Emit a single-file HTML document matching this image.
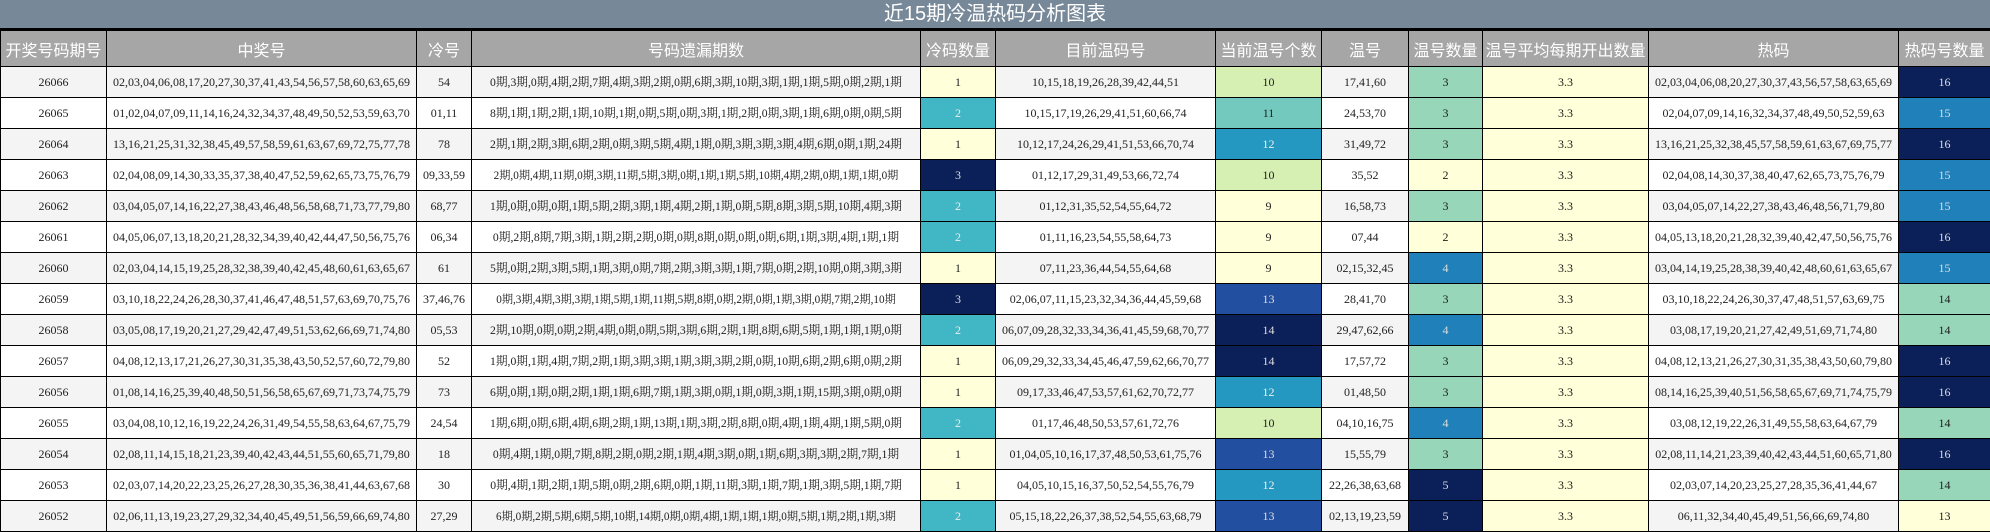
<!DOCTYPE html>
<html><head><meta charset="utf-8"><style>
html,body{margin:0;padding:0;background:#fff;width:1990px;height:532px;overflow:hidden}
.t{height:28px;background:#778899;color:#fff;font:20px "Liberation Sans","Noto Sans CJK SC",sans-serif;text-align:center;line-height:28px;border-bottom:2px solid #000;box-sizing:content-box}
table{border-collapse:collapse;table-layout:fixed;width:1990px;font:12px "Liberation Serif","Noto Serif CJK SC","Noto Sans CJK SC",serif;color:#222}
td,th{border:1px solid #000;text-align:center;white-space:nowrap;overflow:hidden;padding:0}
th{background:#a6a6a6;color:#fff;font:normal 16px "Liberation Sans","Noto Sans CJK SC",sans-serif;height:35px}
td{height:30px}
tr:nth-child(even) td{background:#f4f4f4}
tr:nth-child(odd) td{background:#fff}
td.y{background:#ffffd9!important}
td.g{background:#d6efb3!important}
td.c{background:#73c9bd!important}
td.m{background:#97d6b9!important}
td.a{background:#41b6c4!important;color:#eee}
td.b{background:#2498c1!important;color:#eee}
td.s{background:#2080b9!important;color:#ddd}
td.d{background:#234fa0!important;color:#ddd}
td.n{background:#0b1f59!important;color:#ddd}
.q{font-size:11.7px}
</style></head><body>
<div class="t">近15期冷温热码分析图表</div>
<table>
<colgroup><col style="width:106px"><col style="width:310px"><col style="width:55px"><col style="width:449px"><col style="width:75px"><col style="width:220px"><col style="width:106px"><col style="width:87px"><col style="width:74px"><col style="width:166px"><col style="width:250px"><col style="width:92px"></colgroup>
<tr><th>开奖号码期号</th><th>中奖号</th><th>冷号</th><th>号码遗漏期数</th><th>冷码数量</th><th>目前温码号</th><th>当前温号个数</th><th>温号</th><th>温号数量</th><th>温号平均每期开出数量</th><th>热码</th><th>热码号数量</th></tr>
<tr><td>26066</td><td>02,03,04,06,08,17,20,27,30,37,41,43,54,56,57,58,60,63,65,69</td><td>54</td><td class="q">0期,3期,0期,4期,2期,7期,4期,3期,2期,0期,6期,3期,10期,3期,1期,1期,5期,0期,2期,1期</td><td class="y">1</td><td>10,15,18,19,26,28,39,42,44,51</td><td class="g">10</td><td>17,41,60</td><td class="m">3</td><td class="y">3.3</td><td>02,03,04,06,08,20,27,30,37,43,56,57,58,63,65,69</td><td class="n">16</td></tr>
<tr><td>26065</td><td>01,02,04,07,09,11,14,16,24,32,34,37,48,49,50,52,53,59,63,70</td><td>01,11</td><td class="q">8期,1期,1期,2期,1期,10期,1期,0期,5期,0期,3期,1期,2期,0期,3期,1期,6期,0期,0期,5期</td><td class="a">2</td><td>10,15,17,19,26,29,41,51,60,66,74</td><td class="c">11</td><td>24,53,70</td><td class="m">3</td><td class="y">3.3</td><td>02,04,07,09,14,16,32,34,37,48,49,50,52,59,63</td><td class="s">15</td></tr>
<tr><td>26064</td><td>13,16,21,25,31,32,38,45,49,57,58,59,61,63,67,69,72,75,77,78</td><td>78</td><td class="q">2期,1期,2期,3期,6期,2期,0期,3期,5期,4期,1期,0期,3期,3期,3期,4期,6期,0期,1期,24期</td><td class="y">1</td><td>10,12,17,24,26,29,41,51,53,66,70,74</td><td class="b">12</td><td>31,49,72</td><td class="m">3</td><td class="y">3.3</td><td>13,16,21,25,32,38,45,57,58,59,61,63,67,69,75,77</td><td class="n">16</td></tr>
<tr><td>26063</td><td>02,04,08,09,14,30,33,35,37,38,40,47,52,59,62,65,73,75,76,79</td><td>09,33,59</td><td class="q" style="font-size:11.2px">2期,0期,4期,11期,0期,3期,11期,5期,3期,0期,1期,1期,5期,10期,4期,2期,0期,1期,1期,0期</td><td class="n">3</td><td>01,12,17,29,31,49,53,66,72,74</td><td class="g">10</td><td>35,52</td><td class="y">2</td><td class="y">3.3</td><td>02,04,08,14,30,37,38,40,47,62,65,73,75,76,79</td><td class="s">15</td></tr>
<tr><td>26062</td><td>03,04,05,07,14,16,22,27,38,43,46,48,56,58,68,71,73,77,79,80</td><td>68,77</td><td class="q">1期,0期,0期,0期,1期,5期,2期,3期,1期,4期,2期,1期,0期,5期,8期,3期,5期,10期,4期,3期</td><td class="a">2</td><td>01,12,31,35,52,54,55,64,72</td><td class="y">9</td><td>16,58,73</td><td class="m">3</td><td class="y">3.3</td><td>03,04,05,07,14,22,27,38,43,46,48,56,71,79,80</td><td class="s">15</td></tr>
<tr><td>26061</td><td>04,05,06,07,13,18,20,21,28,32,34,39,40,42,44,47,50,56,75,76</td><td>06,34</td><td class="q">0期,2期,8期,7期,3期,1期,2期,2期,0期,0期,8期,0期,0期,0期,6期,1期,3期,4期,1期,1期</td><td class="a">2</td><td>01,11,16,23,54,55,58,64,73</td><td class="y">9</td><td>07,44</td><td class="y">2</td><td class="y">3.3</td><td>04,05,13,18,20,21,28,32,39,40,42,47,50,56,75,76</td><td class="n">16</td></tr>
<tr><td>26060</td><td>02,03,04,14,15,19,25,28,32,38,39,40,42,45,48,60,61,63,65,67</td><td>61</td><td class="q">5期,0期,2期,3期,5期,1期,3期,0期,7期,2期,3期,3期,1期,7期,0期,2期,10期,0期,3期,3期</td><td class="y">1</td><td>07,11,23,36,44,54,55,64,68</td><td class="y">9</td><td>02,15,32,45</td><td class="s">4</td><td class="y">3.3</td><td>03,04,14,19,25,28,38,39,40,42,48,60,61,63,65,67</td><td class="s">15</td></tr>
<tr><td>26059</td><td>03,10,18,22,24,26,28,30,37,41,46,47,48,51,57,63,69,70,75,76</td><td>37,46,76</td><td class="q" style="font-size:11.2px">0期,3期,4期,3期,3期,1期,5期,1期,11期,5期,8期,0期,2期,0期,1期,3期,0期,7期,2期,10期</td><td class="n">3</td><td>02,06,07,11,15,23,32,34,36,44,45,59,68</td><td class="d">13</td><td>28,41,70</td><td class="m">3</td><td class="y">3.3</td><td>03,10,18,22,24,26,30,37,47,48,51,57,63,69,75</td><td class="m">14</td></tr>
<tr><td>26058</td><td>03,05,08,17,19,20,21,27,29,42,47,49,51,53,62,66,69,71,74,80</td><td>05,53</td><td class="q">2期,10期,0期,0期,2期,4期,0期,0期,5期,3期,6期,2期,1期,8期,6期,5期,1期,1期,1期,0期</td><td class="a">2</td><td>06,07,09,28,32,33,34,36,41,45,59,68,70,77</td><td class="n">14</td><td>29,47,62,66</td><td class="s">4</td><td class="y">3.3</td><td>03,08,17,19,20,21,27,42,49,51,69,71,74,80</td><td class="m">14</td></tr>
<tr><td>26057</td><td>04,08,12,13,17,21,26,27,30,31,35,38,43,50,52,57,60,72,79,80</td><td>52</td><td class="q">1期,0期,1期,4期,7期,2期,1期,3期,3期,1期,3期,3期,2期,0期,10期,6期,2期,6期,0期,2期</td><td class="y">1</td><td>06,09,29,32,33,34,45,46,47,59,62,66,70,77</td><td class="n">14</td><td>17,57,72</td><td class="m">3</td><td class="y">3.3</td><td>04,08,12,13,21,26,27,30,31,35,38,43,50,60,79,80</td><td class="n">16</td></tr>
<tr><td>26056</td><td>01,08,14,16,25,39,40,48,50,51,56,58,65,67,69,71,73,74,75,79</td><td>73</td><td class="q">6期,0期,1期,0期,2期,1期,1期,6期,7期,1期,3期,0期,1期,0期,3期,1期,15期,3期,0期,0期</td><td class="y">1</td><td>09,17,33,46,47,53,57,61,62,70,72,77</td><td class="b">12</td><td>01,48,50</td><td class="m">3</td><td class="y">3.3</td><td>08,14,16,25,39,40,51,56,58,65,67,69,71,74,75,79</td><td class="n">16</td></tr>
<tr><td>26055</td><td>03,04,08,10,12,16,19,22,24,26,31,49,54,55,58,63,64,67,75,79</td><td>24,54</td><td class="q">1期,6期,0期,6期,4期,6期,2期,1期,13期,1期,3期,2期,8期,0期,4期,1期,4期,1期,5期,0期</td><td class="a">2</td><td>01,17,46,48,50,53,57,61,72,76</td><td class="g">10</td><td>04,10,16,75</td><td class="s">4</td><td class="y">3.3</td><td>03,08,12,19,22,26,31,49,55,58,63,64,67,79</td><td class="m">14</td></tr>
<tr><td>26054</td><td>02,08,11,14,15,18,21,23,39,40,42,43,44,51,55,60,65,71,79,80</td><td>18</td><td class="q">0期,4期,1期,0期,7期,8期,2期,0期,2期,1期,4期,3期,0期,1期,6期,3期,3期,2期,7期,1期</td><td class="y">1</td><td>01,04,05,10,16,17,37,48,50,53,61,75,76</td><td class="d">13</td><td>15,55,79</td><td class="m">3</td><td class="y">3.3</td><td>02,08,11,14,21,23,39,40,42,43,44,51,60,65,71,80</td><td class="n">16</td></tr>
<tr><td>26053</td><td>02,03,07,14,20,22,23,25,26,27,28,30,35,36,38,41,44,63,67,68</td><td>30</td><td class="q">0期,4期,1期,2期,1期,5期,0期,2期,6期,0期,1期,11期,3期,1期,7期,1期,3期,5期,1期,7期</td><td class="y">1</td><td>04,05,10,15,16,37,50,52,54,55,76,79</td><td class="b">12</td><td>22,26,38,63,68</td><td class="n">5</td><td class="y">3.3</td><td>02,03,07,14,20,23,25,27,28,35,36,41,44,67</td><td class="m">14</td></tr>
<tr><td>26052</td><td>02,06,11,13,19,23,27,29,32,34,40,45,49,51,56,59,66,69,74,80</td><td>27,29</td><td class="q" style="font-size:11.2px">6期,0期,2期,5期,6期,5期,10期,14期,0期,0期,4期,1期,1期,1期,0期,5期,1期,2期,1期,3期</td><td class="a">2</td><td>05,15,18,22,26,37,38,52,54,55,63,68,79</td><td class="d">13</td><td>02,13,19,23,59</td><td class="n">5</td><td class="y">3.3</td><td>06,11,32,34,40,45,49,51,56,66,69,74,80</td><td class="y">13</td></tr>
</table>
</body></html>
